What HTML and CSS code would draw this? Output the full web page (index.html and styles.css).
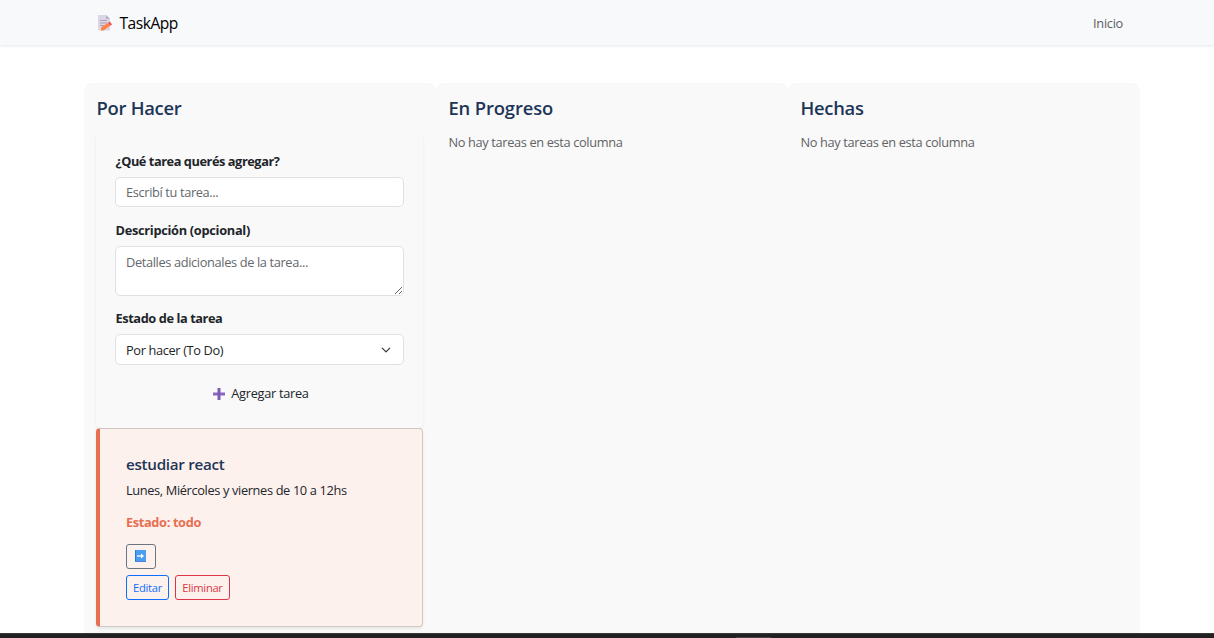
FILE: index.html
```html
<!DOCTYPE html>
<html lang="es">
<head>
<meta charset="utf-8">
<title>TaskApp</title>
<link rel="stylesheet" href="styles.css">
</head>
<body>
<header class="navbar">
  <a class="brand">
    <svg class="brand-icon" width="15" height="16" viewBox="0 0 15 16">
      <path d="M0 0h8l4 4v11.500H0z" fill="#dcd5e5"/>
      <path d="M8 0v4h4z" fill="#b9aec4"/>
      <path d="M2 5.500h7M2 8h7M2 10.500h4" stroke="#aaa1b5" stroke-width="1"/>
      <path d="M3.200 12.300l7-4.600 2 3-6.700 4.800H3z" fill="#ff8347"/>
      <path d="M10 7.800l1.800-1.200 2.300 2.800-1.900 1.300z" fill="#f0525f"/>
    </svg>
    <span class="brand-name">TaskApp</span>
  </a>
  <a class="nav-link">Inicio</a>
</header>
<main class="board">
  <section class="column">
    <h2 class="column-title t-todo">Por Hacer</h2>
    <form class="task-form">
      <label class="label l-task" for="task">¿Qué tarea querés agregar?</label>
      <input class="control field" id="task" placeholder="Escribí tu tarea...">
      <label class="label l-desc" for="desc">Descripción (opcional)</label>
      <textarea class="control area" id="desc" placeholder="Detalles adicionales de la tarea..."></textarea>
      <label class="label l-state">Estado de la tarea</label>
      <div class="control select"><span>Por hacer (To Do)</span>
        <svg width="10" height="10" viewBox="0 0 16 16"><path d="M2 5l6 6 6-6" fill="none" stroke="#343a40" stroke-width="2" stroke-linecap="round" stroke-linejoin="round"/></svg>
      </div>
      <button class="add" type="button">
        <svg width="12" height="12" viewBox="0 0 12 12"><path d="M0 4.500h12v3H0z" fill="#8d65c5"/><path d="M4.500 0h3v12h-3z" fill="#7e5bb5"/></svg>
        <span>Agregar tarea</span>
      </button>
    </form>
    <article class="task">
      <h3 class="task-title">estudiar react</h3>
      <p class="task-text">Lunes, Miércoles y viernes de 10 a 12hs</p>
      <p class="task-state">Estado: todo</p>
      <button class="btn move" type="button" aria-label="Mover">
        <svg width="11" height="12" viewBox="0 0 11 12"><path d="M0 0h11v12H0z" fill="#4a9df0"/><path d="M0 0h1v12H0z" fill="#287bd0"/><path d="M0 11h11v1H0z" fill="#4d80da"/><path d="M2 6h5" stroke="#fff" stroke-width="1.300"/><path d="M6 3.500L9 6 6 8.500z" fill="#fff"/></svg>
      </button>
      <div class="actions">
        <button class="btn edit" type="button">Editar</button>
        <button class="btn remove" type="button">Eliminar</button>
      </div>
    </article>
  </section>
  <section class="column">
    <h2 class="column-title t-doing">En Progreso</h2>
    <p class="empty">No hay tareas en esta columna</p>
  </section>
  <section class="column">
    <h2 class="column-title t-done">Hechas</h2>
    <p class="empty">No hay tareas en esta columna</p>
  </section>
</main>
<footer class="bottom-bar"><div class="handle"></div></footer>
</body>
</html>
```
FILE: styles.css
```css
* { box-sizing: border-box; }
body {
  margin: 0;
  height: 638px;
  overflow: hidden;
  display: flex;
  flex-direction: column;
  background: #fff;
  color: #212529;
  font: 12.8px/19px "Segoe UI", "Open Sans", "Noto Sans", sans-serif;
  letter-spacing: -0.36px;
}
h2, h3, p { margin: 0; }
svg { display: block; flex: none; }
button, input, textarea { font: inherit; letter-spacing: inherit; color: inherit; }

.navbar {
  flex: none;
  height: 45px;
  padding: 0 91px 0 98px;
  display: flex;
  align-items: center;
  justify-content: space-between;
  background: #f8f9fb;
  box-shadow: 0 1px 3px rgba(0, 0, 0, .1);
}
.brand { display: flex; align-items: center; gap: 6.500px; }
.brand-name { font-size: 15.600px; line-height: 24px; letter-spacing: -0.5px; color: #000; }
.nav-link { color: #5b5c5e; padding-top: 2px; letter-spacing: -0.3px; }

.board {
  flex: 1;
  min-height: 0;
  margin: 38px 74px 0 84px;
  display: grid;
  grid-template-columns: repeat(3, 352px);
  overflow: hidden;
}
.column { padding: 12px 13px 0 12px; background: #f9f9f9; border-radius: 8px 8px 0 0; }
.column-title { padding-left: .5px; font-size: 18.400px; line-height: 26px; font-weight: 600; letter-spacing: -0.28px; color: #1d3557; }
.t-doing { letter-spacing: -0.14px; }
.empty { margin-top: 12px; padding-left: .5px; color: #5f6265; }

.task-form {
  height: 296px;
  margin-top: 11px;
  padding: 20px 19px 0;
  display: flex;
  flex-direction: column;
  border-radius: 5px;
  box-shadow: 0 2px 3px rgba(0, 0, 0, .06);
}
.label { padding-left: .5px; font-weight: 700; margin-bottom: 6px; }
.l-task { letter-spacing: -0.45px; }
.l-desc { letter-spacing: -0.3px; }
.l-state { letter-spacing: -0.42px; }
.control {
  flex: none;
  width: 100%;
  margin: 0;
  padding: 0 10px;
  border: 1px solid #dee2e6;
  border-radius: 5px;
  background: #fff;
  outline: none;
}
.control::placeholder { color: #64686c; opacity: 1; }
.field { height: 30px; margin-bottom: 14px; }
.area { height: 50px; padding-top: 6px; margin-bottom: 13px; resize: vertical; }
.select { height: 31px; padding-top: 1px; padding-right: 12px; display: flex; align-items: center; justify-content: space-between; }
.add {
  align-self: center;
  display: flex;
  align-items: center;
  gap: 6px;
  margin: 19px 0 0 3px;
  padding: 0;
  border: 0;
  background: none;
  letter-spacing: -0.3px;
}

.task {
  height: 199px;
  padding: 25px 25px 0 26px;
  border: 1px solid #d2c6c3;
  border-left: 4px solid #e76f51;
  border-radius: 4px;
  background: #fdf1ed;
  box-shadow: 0 2px 3px rgba(0, 0, 0, .07);
}
.task-title { font-size: 15.200px; line-height: 20px; font-weight: 600; letter-spacing: -0.28px; color: #1d3557; }
.task-text { margin-top: 7px; }
.task-state { margin: 13px 0 12px; font-weight: 700; color: #e76f51; }
.btn {
  height: 25px;
  padding: 0;
  display: flex;
  align-items: center;
  justify-content: center;
  border: 1px solid;
  border-radius: 3px;
  background: none;
  font-size: 11.200px;
  letter-spacing: -0.3px;
}
.move { width: 30px; border-color: #6c757d; padding: 0 1px 1px 0; }
.actions { display: flex; gap: 6px; margin-top: 6px; }
.edit { width: 43px; color: #0d6efd; border-color: #0d6efd; }
.remove { width: 55px; color: #dc3545; border-color: #dc3545; }

.bottom-bar { flex: none; height: 5px; background: #202020; border-top: 1px solid #393939; display: flex; justify-content: center; }
.handle { width: 35px; height: 1px; margin: 3px 0 0 293px; background: #444; }
```
